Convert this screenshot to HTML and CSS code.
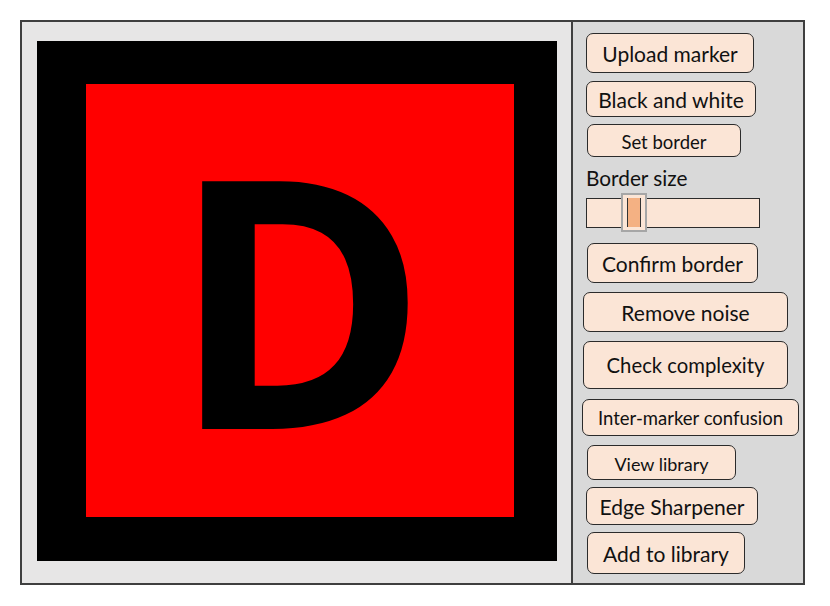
FILE: index.html
```html
<!DOCTYPE html>
<html>
<head>
<meta charset="utf-8">
<link rel="stylesheet" href="styles.css">
</head>
<body>
<div class="frame">
  <div class="canvas">
    <div class="marker">
      <div class="marker-inner">
        <span class="letter">D</span>
      </div>
    </div>
  </div>
  <div class="panel">
    <button class="btn b-upload">Upload marker</button>
    <button class="btn b-bw">Black and white</button>
    <button class="btn b-set">Set border</button>
    <div class="label">Border size</div>
    <div class="slider"><div class="thumb"><div class="thumb-fill"></div></div></div>
    <button class="btn b-confirm">Confirm border</button>
    <button class="btn b-noise">Remove noise</button>
    <button class="btn b-complex">Check complexity</button>
    <button class="btn b-inter">Inter-marker confusion</button>
    <button class="btn b-view">View library</button>
    <button class="btn b-edge">Edge Sharpener</button>
    <button class="btn b-add">Add to library</button>
  </div>
</div>
</body>
</html>
```
FILE: styles.css
```css
html, body {
  margin: 0;
  padding: 0;
  background: #ffffff;
}
body {
  font-family: "Lato", "Open Sans", sans-serif;
}
.frame {
  margin: 20px 0 0 20px;
  width: 785px;
  height: 565px;
  box-sizing: border-box;
  border: 2px solid #3f3f3f;
  display: flex;
}
.canvas {
  width: 551px;
  background: #e7e6e6;
  border-right: 2px solid #3f3f3f;
  padding: 19px 0 0 15px;
  box-sizing: border-box;
}
.marker {
  width: 520px;
  height: 520px;
  background: #000000;
  padding: 43px 0 0 49px;
  box-sizing: border-box;
}
.marker-inner {
  width: 428px;
  height: 433px;
  background: #ff0000;
  padding-left: 85px;
  box-sizing: border-box;
}
.letter {
  display: block;
  font-family: "Open Sans", sans-serif;
  font-weight: 700;
  font-size: 347px;
  line-height: 421px;
  color: #000000;
}
.panel {
  flex: 1;
  background: #d9d9d9;
  display: flex;
  flex-direction: column;
  align-items: flex-start;
  padding-left: 13px;
}
.btn {
  font-family: "Lato", "Open Sans", sans-serif;
  background: #fbe5d6;
  border: 1.5px solid #2b2b2b;
  border-radius: 7px;
  color: #111111;
  padding: 0;
  display: flex;
  align-items: center;
  justify-content: center;
  box-sizing: border-box;
  font-size: 21px;
}
.b-upload { margin-top: 11px; width: 168px; height: 40px; }
.b-bw { margin-top: 8px; width: 170px; height: 36px; }
.b-set { margin-top: 7px; margin-left: 1px; width: 154px; height: 33px; font-size: 18.5px; padding-top: 2px; }
.label {
  margin-top: 9px;
  font-size: 20.8px;
  color: #111111;
  line-height: 24px;
}
.slider {
  margin-top: 8px;
  width: 174px;
  height: 30px;
  box-sizing: border-box;
  background: #fbe5d6;
  border: 1.5px solid #2b2b2b;
  position: relative;
}
.thumb {
  position: absolute;
  left: 34px;
  top: -6px;
  width: 26px;
  height: 39px;
  box-sizing: border-box;
  border: 2px solid #a6a6a6;
  background: #fbe5d6;
  display: flex;
  justify-content: center;
  align-items: center;
}
.thumb-fill {
  width: 12px;
  height: 29px;
  background: #f4b183;
  border-left: 1.5px solid #333;
  border-right: 1.5px solid #333;
}
.b-confirm { margin-top: 15px; margin-left: 1px; width: 171px; height: 40px; }
.b-noise { margin-top: 9px; margin-left: -3px; width: 205px; height: 40px; }
.b-complex { margin-top: 9px; margin-left: -3px; width: 205px; height: 48px; font-size: 20.3px; }
.b-inter { margin-top: 10px; margin-left: -4px; width: 217px; height: 37px; font-size: 18.5px; }
.b-view { margin-top: 9px; margin-left: 1px; width: 149px; height: 35px; font-size: 18px; padding-top: 2px; }
.b-edge { margin-top: 7px; width: 172px; height: 38px; }
.b-add { margin-top: 7px; margin-left: 1px; width: 158px; height: 42px; }
```
